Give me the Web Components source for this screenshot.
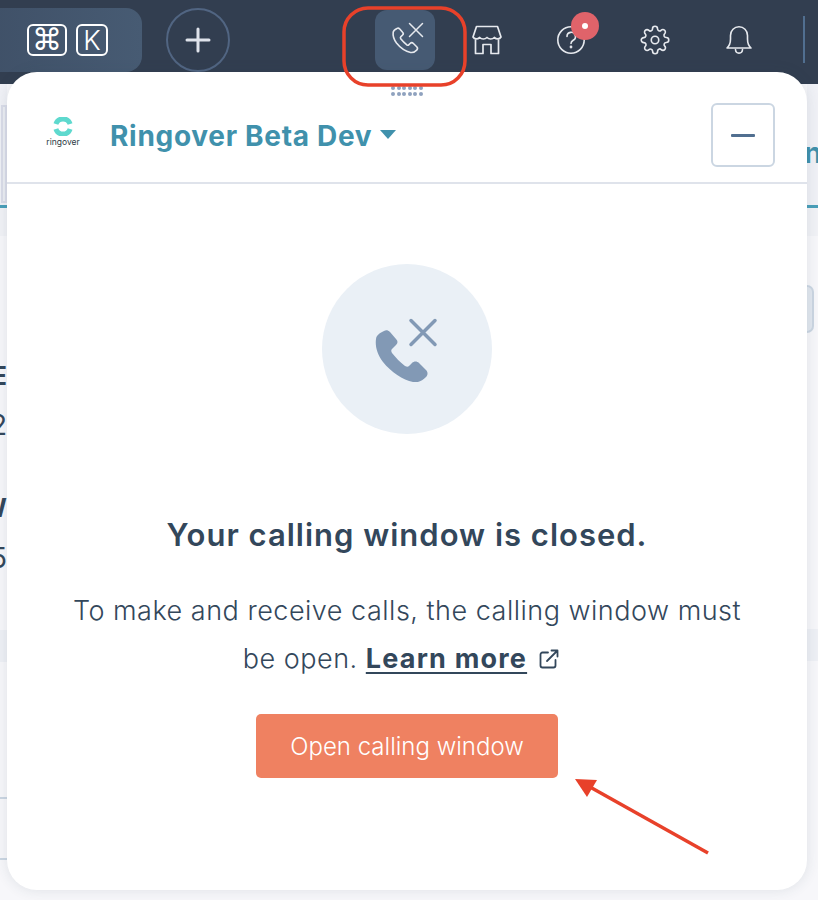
<!DOCTYPE html>
<html lang="en"><head><meta charset="utf-8"><title>Calling window</title>
<style>
html,body{margin:0;padding:0;height:900px;overflow:hidden;background:#f7f7fa;font-family:Inter,"Noto Sans",sans-serif}
app-frame{height:900px}
nav-icon span[slot=badge]::after{content:"";position:absolute;left:11px;top:11px;width:6px;height:6px;border-radius:50%;background:#fff}
</style></head><body>
<app-frame>
  <top-bar>
    <search-pill></search-pill>
    <round-add></round-add>
    <nav-icon active>
      <svg width="40" height="40" viewBox="0 0 40 40" fill="none" stroke="currentColor" stroke-width="1.6" stroke-linecap="round" stroke-linejoin="round"><g transform="translate(8.2,8) scale(.47)"><path stroke-width="3.4" d="M8 1C10-.5 12 0 14 2L20 9C22 11 22 13 20 15L16 19C15 20 15 21 16 23C20 28 24 32 29 36C31 37 32 37 33 36L36 33C38 31 41 31 43 33L50 40C52 42 52 45 50 47C46 51 42 53 37 52C27 50 15 42 7 32C1 24-1 16 0 9C.5 5 4 3 8 1Z"/></g><path d="M24.5 3.5 37.5 16.5M37.5 3.5 24.5 16.5" stroke-width="1.5"/></svg>
    </nav-icon>
    <nav-icon>
      <svg width="32" height="32" viewBox="0 0 32 32" fill="none" stroke="currentColor" stroke-width="1.7" stroke-linejoin="round" stroke-linecap="round"><path d="M5.5 2.5H26.5L30 13C28.5 15.5 25.5 15.5 23.3 13.5 21.5 15.5 18 15.5 16 13.5 14 15.5 10.5 15.5 8.7 13.5 6.5 15.5 3.5 15.5 2 13Z"/><path d="M4.5 16V29.5H12V20.5H20V29.5H27.5V16"/></svg>
    </nav-icon>
    <nav-icon>
      <svg width="30" height="30" viewBox="0 0 30 30" fill="none" stroke="currentColor" stroke-width="1.6" stroke-linecap="round"><circle cx="15" cy="15" r="13.2"/><path d="M11 11.5A4.2 4.2 0 1 1 17.2 15.2C15.7 16.1 15 16.8 15 18.5"/><circle cx="15" cy="22" r=".6"/></svg>
      <span slot="badge"></span>
    </nav-icon>
    <nav-icon>
      <svg width="30" height="30" viewBox="0 0 24 24" fill="none" stroke="currentColor" stroke-width="1.3" stroke-linejoin="round"><circle cx="12" cy="12" r="3"/><path d="M19.4 15a1.65 1.65 0 0 0 .33 1.82l.06.06a2 2 0 0 1 0 2.83 2 2 0 0 1-2.83 0l-.06-.06a1.65 1.65 0 0 0-1.82-.33 1.65 1.65 0 0 0-1 1.51V21a2 2 0 0 1-2 2 2 2 0 0 1-2-2v-.09A1.65 1.65 0 0 0 9 19.4a1.65 1.65 0 0 0-1.82.33l-.06.06a2 2 0 0 1-2.83 0 2 2 0 0 1 0-2.83l.06-.06a1.65 1.65 0 0 0 .33-1.82 1.65 1.65 0 0 0-1.51-1H3a2 2 0 0 1-2-2 2 2 0 0 1 2-2h.09A1.65 1.65 0 0 0 4.6 9a1.65 1.65 0 0 0-.33-1.82l-.06-.06a2 2 0 0 1 0-2.83 2 2 0 0 1 2.83 0l.06.06a1.65 1.65 0 0 0 1.82.33H9a1.65 1.65 0 0 0 1-1.51V3a2 2 0 0 1 2-2 2 2 0 0 1 2 2v.09a1.65 1.65 0 0 0 1 1.51 1.65 1.65 0 0 0 1.82-.33l.06-.06a2 2 0 0 1 2.83 0 2 2 0 0 1 0 2.83l-.06.06a1.65 1.65 0 0 0-.33 1.82V9a1.65 1.65 0 0 0 1.51 1H21a2 2 0 0 1 2 2 2 2 0 0 1-2 2h-.09a1.65 1.65 0 0 0-1.51 1z"/></svg>
    </nav-icon>
    <nav-icon>
      <svg width="30" height="30" viewBox="0 0 30 30" fill="none" stroke="currentColor" stroke-width="1.6" stroke-linecap="round" stroke-linejoin="round"><path d="M3 23C5.8 20.5 6.5 18 6.5 14V10.5C6.5 5.3 10.3 1.8 15 1.8S23.5 5.3 23.5 10.5V14C23.5 18 24.2 20.5 27 23Z"/><path d="M11.5 24.5C11.8 29.3 18.2 29.3 18.5 24.5"/></svg>
    </nav-icon>
    <bar-divider></bar-divider>
  </top-bar>
  <page-peek></page-peek>
  <call-popover>
    <span slot="title">Ringover Beta Dev</span>
    <span slot="heading">Your calling window is closed.</span>
  </call-popover>
  <mark-layer></mark-layer>
</app-frame>
<script>
function def(name, css, html){
  customElements.define(name, class extends HTMLElement{
    constructor(){super();this.attachShadow({mode:'open'}).innerHTML='<style>'+css+'</style>'+html;}
  });
}
def('app-frame',':host{display:flex;flex-direction:column;position:relative;overflow:hidden}','<slot></slot>');
def('top-bar',':host{display:flex;align-items:flex-start;height:84px;box-sizing:border-box;padding-top:8px;background:#323e50;flex:none}','<slot></slot>');
def('search-pill',`:host{display:flex;align-items:center;justify-content:flex-end;gap:9px;box-sizing:border-box;width:162px;height:64px;margin-left:-20px;padding-right:34px;border-radius:16px;background:linear-gradient(90deg,#3f5067,#475b73);flex:none;font-family:Inter,"DejaVu Sans",sans-serif;color:#fff}
 b{display:flex;align-items:center;justify-content:center;box-sizing:border-box;height:32px;border:2px solid #fff;border-radius:6px;font-weight:300}
 .a{width:40px;font:400 30px/28px "DejaVu Sans",sans-serif}.k{width:32px;font-size:27px}`,'<b class="a">⌘</b><b class="k">K</b>');
def('round-add',`:host{display:flex;align-items:center;justify-content:center;box-sizing:border-box;width:64px;height:64px;margin-left:24px;border:2px solid #516582;border-radius:50%;flex:none}`,
 '<svg width="26" height="26" viewBox="0 0 26 26" stroke="#dfe3eb" stroke-width="3" stroke-linecap="round"><path d="M13 2V24M2 13H24"/></svg>');
def('nav-icon',`:host{display:flex;align-items:center;justify-content:center;position:relative;width:60px;height:64px;margin-left:24px;color:#e6e9ee;flex:none}
 :host([active]){height:60px;margin:2px -2px 0 145px;background:#465a73;border-radius:12px}
 ::slotted([slot=badge]){position:absolute;left:30px;top:4px;width:28px;height:28px;border-radius:50%;background:#e0636a}
 ::slotted(svg){display:block}`,'<slot></slot><slot name="badge"></slot>');
def('bar-divider',':host{display:block;width:2px;height:47px;margin:8px 0 0 34px;background:#516f90;flex:none}','');
def('page-peek',`:host{display:flex;justify-content:space-between;flex:1;min-height:0;background:#f7f7fa;color:#33475b;font-family:Inter,sans-serif}
 .l,.r{position:relative;overflow:hidden;flex:none;display:flex;flex-direction:column}
 .l{width:7px}.r{width:11px}
 .tabs{background:#f0f1f6;border-bottom:3px solid #4a9fb9;flex:none}
 .l .tabs{box-sizing:border-box;height:124px;padding-top:21px}
 .r .tabs{box-sizing:border-box;height:124px;padding-top:49px;color:#4091ac;font:700 29px/40px Inter,sans-serif;overflow:hidden;text-indent:-3px}
 .box{box-sizing:border-box;height:98px;width:6px;margin-left:1px;border:2px solid #d9dce8;background:#eceef3}
 .fade{height:28px;background:#f1f2f6;flex:none}
 .glyph{display:flex;justify-content:flex-end;width:7px;flex:none;white-space:nowrap}
 .g1{margin-top:128px;font:700 25px/24px Inter,sans-serif}
 .g2{margin-top:20px;font:400 28px/34px Inter,sans-serif}
 .g3{margin-top:54px;font:700 25px/24px Inter,sans-serif}
 .g4{margin-top:21px;font:400 28px/34px Inter,sans-serif}
 .band{height:32px;background:#eef0f5;flex:none}
 .r .field{box-sizing:border-box;height:48px;width:7px;margin-top:49px;background:#e1e7ef;border:2px solid #cbd6e2;border-left:0;border-radius:0 7px 7px 0;flex:none}
 .r .band{margin-top:296px}
 .rule{height:2px;background:#cbd6e2;flex:none}`,
 `<div class="l"><div class="tabs"><div class="box"></div></div><div class="fade"></div>
  <div class="glyph g1">E</div><div class="glyph g2">2</div><div class="glyph g3">W</div><div class="glyph g4">5</div>
  <div class="band" style="margin-top:55px"></div><div class="rule" style="margin-top:135px"></div><div class="rule" style="margin-top:59px"></div></div>
  <div class="r"><div class="tabs">n</div><div class="fade"></div><div class="field"></div><div class="band"></div></div>`);
def('call-popover',`:host{position:absolute;left:7px;top:72px;width:800px;height:818px;display:flex;flex-direction:column;background:#fff;border-radius:30px;box-shadow:0 0 14px rgba(45,62,80,.12);color:#33475b;font-family:Inter,sans-serif}
 header{position:relative;display:flex;align-items:center;height:94px;padding:16px 32px 0 36px;border-bottom:2px solid #dfe3eb;flex:none}
 .grip{position:absolute;left:384px;top:14px;display:grid;grid-template-columns:repeat(6,4px);gap:1.6px;grid-auto-rows:4px}
 .grip i{background:#8fa2bf;border-radius:50%}
 .logo{width:40px;margin-top:-6px;display:flex;flex-direction:column;align-items:center;flex:none;color:#2d3a45;font:400 8.5px/10px Inter,sans-serif}
 .logo svg{display:block;margin-bottom:1px}
 .title{margin:1px 0 0 27px;color:#4091ac;font-weight:700;font-size:28px;letter-spacing:.7px;line-height:34px;display:flex;align-items:center;white-space:nowrap}
 .title svg{margin-left:8px;margin-top:-2px}
 button.min{margin:0 0 0 auto;box-sizing:border-box;width:64px;height:64px;border:2px solid #cbd6e2;border-radius:6px;background:#fff;display:flex;align-items:center;justify-content:center;padding:0}
 .min i{display:block;width:24px;height:3px;background:#516f90;border-radius:1px}
 main{display:flex;flex-direction:column;align-items:center;padding-top:80px}
 .disc{width:170px;height:170px;border-radius:50%;background:#eaf0f6;display:flex;align-items:center;justify-content:center;flex:none}
 h1{margin:81px 0 0;font-size:31px;line-height:40px;font-weight:600;letter-spacing:1px;white-space:nowrap}
 p{margin:32px 0 0;font-size:27px;line-height:48px;font-weight:300;letter-spacing:.5px;text-align:center;white-space:nowrap}
 a{color:#33475b;font-weight:700;letter-spacing:1.2px;text-decoration:underline;text-decoration-thickness:2px;text-underline-offset:4px}
 p svg{vertical-align:-1px;margin:0 12px 0 4px}
 button{margin-top:31px;width:302px;height:64px;border:0;border-radius:5px;background:#ef8161;color:#fff;font:300 24px/30px Inter,sans-serif;padding:2px 0 0}`,
 `<header><div class="grip">${'<i></i>'.repeat(12)}</div>
   <div class="logo"><svg width="20" height="19" viewBox="0 0 20 19" fill="none" stroke="#5ed9ce" stroke-width="5"><path d="M2.9 7A7.5 7.5 0 0 1 17.1 7M17.1 12A7.5 7.5 0 0 1 2.9 12"/></svg><span>ringover</span></div>
   <div class="title"><slot name="title"></slot><svg width="16" height="9" viewBox="0 0 16 9" fill="#4091ac"><path d="M0 0H16L8 9Z"/></svg></div>
   <button class="min" aria-label="Minimize"><i></i></button></header>
  <main>
   <div class="disc"><svg width="64" height="66" viewBox="0 0 64 66" fill="none"><g transform="translate(1,14)"><path fill="#8299b5" d="M8 1C10-.5 12 0 14 2L20 9C22 11 22 13 20 15L16 19C15 20 15 21 16 23C20 28 24 32 29 36C31 37 32 37 33 36L36 33C38 31 41 31 43 33L50 40C52 42 52 45 50 47C46 51 42 53 37 52C27 50 15 42 7 32C1 24-1 16 0 9C.5 5 4 3 8 1Z"/></g><path d="M36 4.5 60 28.5M60 4.5 36 28.5" stroke="#8299b5" stroke-width="3.5" stroke-linecap="round"/></svg></div>
   <h1><slot name="heading"></slot></h1>
   <p>To make and receive calls, the calling window must<br>be open. <a>Learn more</a> <svg width="20" height="20" viewBox="0 0 20 20" fill="none" stroke="#33475b" stroke-width="1.8" stroke-linecap="round" stroke-linejoin="round"><path d="M9 3.5H3.5A2 2 0 0 0 1.5 5.5V16.5A2 2 0 0 0 3.5 18.5H14.5A2 2 0 0 0 16.5 16.5V11M8 12 18.5 1.5M12.5 1.5H18.5V7.5"/></svg></p>
   <button>Open calling window</button>
  </main>`);
def('mark-layer',':host{position:absolute;inset:0;pointer-events:none}svg{display:block}',
 `<svg width="818" height="900" viewBox="0 0 818 900" fill="none"><rect x="344" y="8" width="121" height="77" rx="24" stroke="#e8412a" stroke-width="3.5"/><path d="M708 853 590 787" stroke="#e8412a" stroke-width="3.5"/><path d="M575 779 597 780 587 797Z" fill="#e8412a"/></svg>`);
</script>
</body></html>
